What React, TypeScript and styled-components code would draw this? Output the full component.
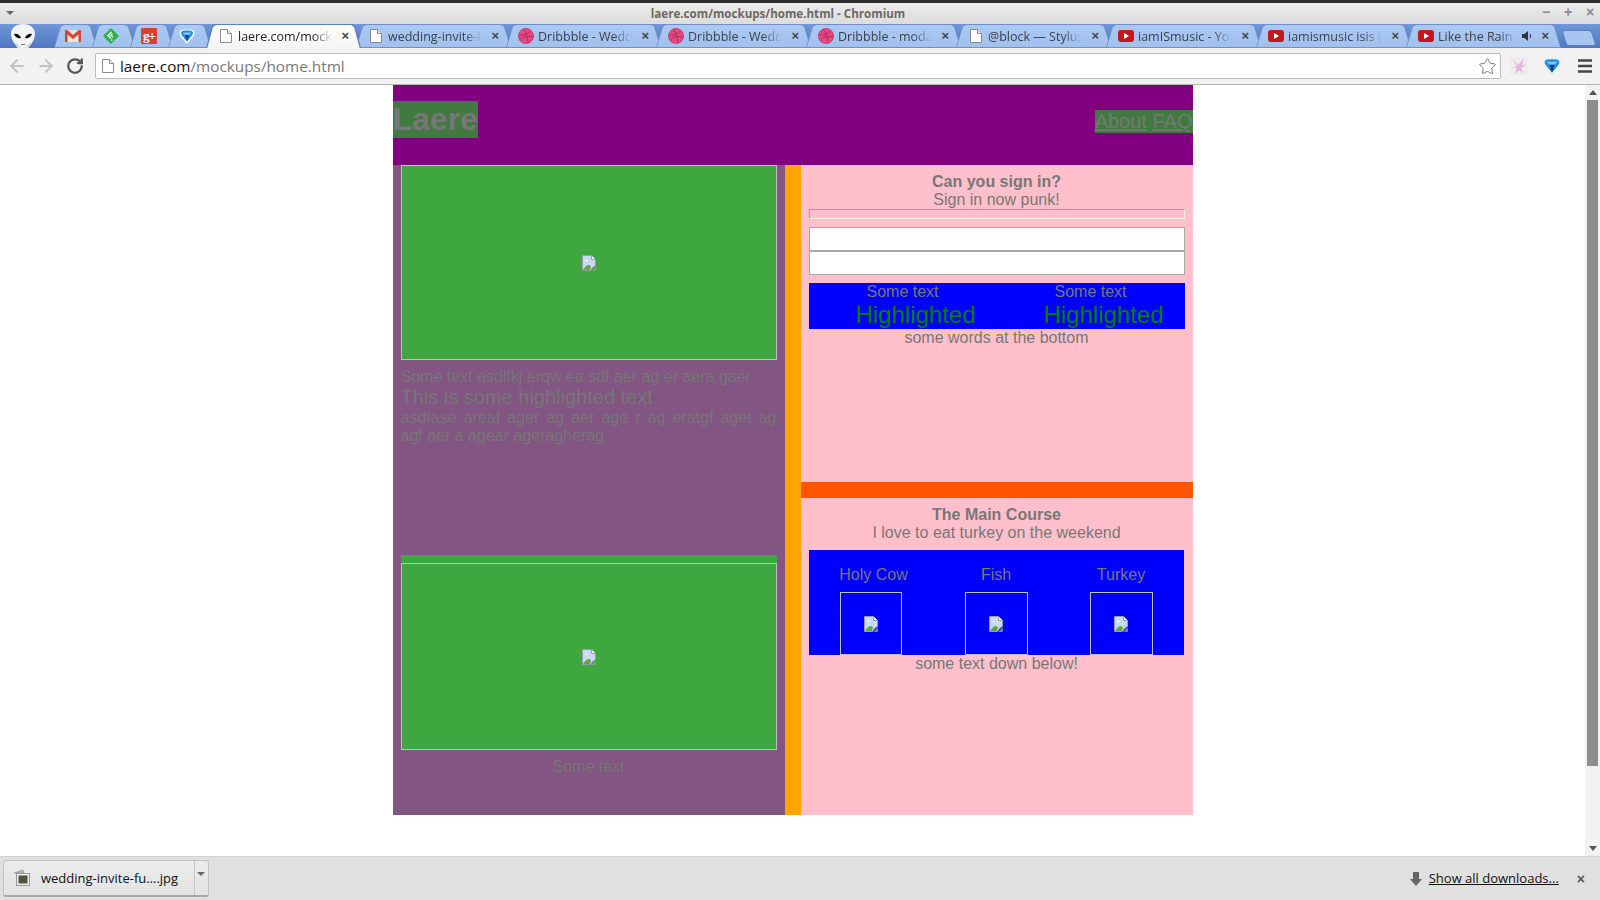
import React from "react";
import styled, { createGlobalStyle } from "styled-components";
import { ArrowLeft, ArrowRight, RotateCw, Star } from "lucide-react";

const GlobalStyle = createGlobalStyle`
  html, body {
    margin: 0;
    height: 100%;
    overflow: hidden;
    background: #fff;
  }
`;

const UI_FONT = `"Open Sans", "Noto Sans", "DejaVu Sans", sans-serif`;
const PAGE_FONT = `"Liberation Sans", Arial, sans-serif`;

const Window = styled.div`
  display: flex;
  flex-direction: column;
  width: 1600px;
  height: 900px;
  overflow: hidden;
`;

const TitleBar = styled.div`
  flex: 0 0 24px;
  box-sizing: border-box;
  position: relative;
  display: flex;
  align-items: center;
  justify-content: center;
  padding-right: 44px;
  border-top: 3px solid #2c2c2c;
  background: linear-gradient(#ececec, #dcdcdc);
  font: 700 11.6px ${UI_FONT};
  color: #6d6862;
`;

const MenuCaret = styled.span`
  position: absolute;
  left: 6px;
  top: 8px;
  border-left: 4px solid transparent;
  border-right: 4px solid transparent;
  border-top: 4px solid #666;
`;

const WindowControls = styled.div`
  position: absolute;
  right: 3px;
  top: 1px;
  display: flex;
  gap: 8px;
  color: #8a8a8a;
  font: 700 14px ${PAGE_FONT};
`;

const WindowControl = styled.span`
  width: 14px;
  text-align: center;
`;

const TabStrip = styled.div`
  flex: 0 0 24px;
  display: flex;
  align-items: stretch;
  padding-left: 8px;
  background: linear-gradient(#6f96d8, #4f78c4);
`;

const AvatarSlot = styled.div`
  flex: 0 0 46px;
  position: relative;
  z-index: 6;
`;

const AvatarImage = styled.svg`
  position: absolute;
  left: 3px;
  top: 0;
`;

const Tab = styled.div<{ $active?: boolean; $pinned?: boolean }>`
  position: relative;
  flex: 0 0 ${(p) => (p.$pinned ? "38px" : "150px")};
  display: flex;
  align-items: center;
  justify-content: ${(p) => (p.$pinned ? "center" : "flex-start")};
  padding-left: ${(p) => (p.$pinned ? "0" : "12px")};
  box-sizing: border-box;
  z-index: ${(p) => (p.$active ? 5 : 1)};
  font: 12.5px ${UI_FONT};
  color: ${(p) => (p.$active ? "#222" : "#3a3f48")};

  &::before,
  &::after {
    content: "";
    position: absolute;
    top: 0;
    bottom: 0;
    left: 0;
    right: -5px;
    z-index: -1;
    clip-path: polygon(0 100%, 6px 8%, 9px 0, calc(100% - 9px) 0, calc(100% - 6px) 8%, 100% 100%);
  }
  &::before {
    background: ${(p) => (p.$active ? "#5a7fbf" : "#6f8fc8")};
  }
  &::after {
    top: 1px;
    bottom: ${(p) => (p.$active ? "-1px" : "1px")};
    left: 1px;
    right: -4px;
    background: ${(p) =>
      p.$active ? "linear-gradient(#fff, #f3f3f3)" : "linear-gradient(#acc9f2, #a0c0ee)"};
  }
`;

const TabIconSlot = styled.span`
  flex: 0 0 16px;
  display: flex;
  align-items: center;
  justify-content: center;
`;

const TabTitle = styled.span<{ $narrow?: boolean }>`
  flex: 0 0 ${(p) => (p.$narrow ? "78px" : "94px")};
  margin-left: 4px;
  overflow: hidden;
  white-space: nowrap;
  -webkit-mask-image: linear-gradient(to right, #000 80%, transparent);
  mask-image: linear-gradient(to right, #000 80%, transparent);
`;

const TabClose = styled.span`
  position: absolute;
  right: 7px;
  top: 4px;
  font: 700 13px ${PAGE_FONT};
  color: #444;
`;

const Speaker = styled.svg`
  position: absolute;
  right: 23px;
  top: 7px;
`;

const GoogleMark = styled.span`
  width: 16px;
  height: 16px;
  display: block;
  background: #d8402f;
  border-radius: 1px;
  color: #fff;
  font: 700 13px/15px "Liberation Serif", serif;
  text-align: center;
  letter-spacing: -1px;
`;

const NewTab = styled.div`
  width: 28px;
  height: 14px;
  margin: 6px 0 0 8px;
  border: 1px solid #5d80bd;
  background: #a6c5ef;
  transform: skewX(18deg);
  border-radius: 3px;
`;

const Toolbar = styled.div`
  flex: 0 0 37px;
  box-sizing: border-box;
  display: flex;
  align-items: center;
  padding: 0 5px 0 7px;
  background: #f2f2f2;
  border-bottom: 1px solid #b4b4b4;
`;

const NavGroup = styled.div`
  display: flex;
  gap: 9px;
  margin-right: 10px;
`;

const NavSlot = styled.div<{ $dim?: boolean }>`
  width: 20px;
  height: 20px;
  display: flex;
  align-items: center;
  justify-content: center;
  color: ${(p) => (p.$dim ? "#c4c4c4" : "#555")};
`;

const AddressBar = styled.div`
  flex: 1;
  height: 26px;
  display: flex;
  align-items: center;
  box-sizing: border-box;
  padding: 0 3px 0 6px;
  margin-right: 8px;
  background: #fff;
  border: 1px solid #bcbcbc;
  border-radius: 2px;
  font: 15.3px ${UI_FONT};
`;

const UrlHost = styled.span`
  margin-left: 6px;
  color: #111;
`;

const UrlPath = styled.span`
  flex: 1;
  color: #777;
`;

const ToolIcons = styled.div`
  display: flex;
  align-items: center;
  gap: 13px;
`;

const ToolSlot = styled.div`
  width: 20px;
  height: 20px;
  display: flex;
  align-items: center;
  justify-content: center;
`;

const Viewport = styled.div`
  flex: 1;
  min-height: 0;
  display: flex;
`;

const PageArea = styled.div`
  flex: 1;
  display: flex;
  justify-content: center;
  background: #fff;
`;

const Scrollbar = styled.div`
  flex: 0 0 15px;
  display: flex;
  flex-direction: column;
  align-items: center;
  padding: 5px 0;
  box-sizing: border-box;
  background: #f2f2f2;
`;

const ScrollThumb = styled.div`
  width: 11px;
  height: 666px;
  margin: 5px 0 auto;
  background: #8d8d8d;
`;

const ScrollArrow = styled.span<{ $down?: boolean }>`
  border-left: 4px solid transparent;
  border-right: 4px solid transparent;
  ${(p) => (p.$down ? "border-top: 5px solid #555;" : "border-bottom: 5px solid #555;")}
`;

const Page = styled.div`
  width: 800px;
  height: 730px;
  display: flex;
  flex-direction: column;
  font: 16px/18px ${PAGE_FONT};
  color: #777;
`;

const Header = styled.header`
  flex: 0 0 80px;
  box-sizing: border-box;
  display: flex;
  justify-content: space-between;
  align-items: flex-start;
  padding-top: 16px;
  background: #800080;
`;

const Logo = styled.h1`
  margin: 0;
  font-size: 32px;
  line-height: 37px;
  font-weight: 700;
  background: #417a41;
`;

const Nav = styled.nav`
  margin-top: 9px;
  font-size: 20px;
  line-height: 23px;
  background: #417a41;
`;

const NavLink = styled.a`
  color: inherit;
  text-decoration: underline;
`;

const Columns = styled.div`
  flex: 1;
  display: flex;
`;

const LeftColumn = styled.section`
  flex: 0 0 392px;
  background: #825582;
`;

const Divider = styled.div`
  flex: 0 0 16px;
  background: #ffa500;
`;

const RightColumn = styled.section`
  flex: 1;
  display: flex;
  flex-direction: column;
  background: #ffc0cb;
  text-align: center;
`;

const Intro = styled.div`
  height: 390px;
  padding: 0 8px;
  box-sizing: border-box;
`;

const Photo = styled.div<{ $height: number }>`
  height: ${(p) => p.$height}px;
  box-sizing: border-box;
  display: flex;
  align-items: center;
  justify-content: center;
  border: 1px solid #c0c0c0;
  background: #3fa73f;
`;

const Copy = styled.div`
  margin-top: 8px;
`;

const Lead = styled.div`
  font-size: 20px;
  line-height: 23px;
`;

const Justified = styled.div`
  text-align: justify;
`;

const Feature = styled.div`
  padding: 0 8px;
`;

const FeatureBand = styled.div`
  padding-top: 8px;
  background: #3fa73f;
`;

const Caption = styled.div`
  margin-top: 8px;
  text-align: center;
`;

const Panel = styled.div`
  flex: 1;
  padding: 8px 8px 0;
`;

const PanelRule = styled.div`
  flex: 0 0 16px;
  background: #ff5500;
`;

const PanelTitle = styled.div`
  font-weight: 700;
`;

const EmptyField = styled.div`
  height: 10px;
  box-sizing: border-box;
  border: 1px solid;
  border-color: #a0a0a0 #eee #eee #a0a0a0;
`;

const Inputs = styled.div`
  margin: 8px 0;
  display: flex;
  flex-direction: column;
`;

const Field = styled.input`
  display: block;
  width: 100%;
  height: 24px;
  box-sizing: border-box;
  padding: 0;
  border: 1px solid #a9a9a9;
  background: #fff;
  outline: none;
`;

const PromoBar = styled.div`
  display: grid;
  grid-template-columns: 1fr 1fr;
  background: #00f;
`;

const PromoHighlight = styled.div`
  padding-left: 26px;
  font-size: 24px;
  line-height: 28px;
  color: #008000;
`;

const MenuBar = styled.div`
  width: 375px;
  height: 105px;
  padding-top: 16px;
  box-sizing: border-box;
  display: grid;
  grid-template-columns: repeat(3, 125px);
  margin-top: 8px;
  background: #00f;
`;

const MenuItem = styled.div`
  display: flex;
  flex-direction: column;
  align-items: center;
  gap: 8px;
`;

const MenuLabel = styled.span<{ $offset?: number }>`
  padding-left: ${(p) => p.$offset || 0}px;
`;

const Thumb = styled.div<{ $width: number }>`
  width: ${(p) => p.$width}px;
  height: 63px;
  box-sizing: border-box;
  display: flex;
  align-items: center;
  justify-content: center;
  border: 1px solid #c0c0c0;
`;

const Shelf = styled.footer`
  flex: 0 0 44px;
  box-sizing: border-box;
  display: flex;
  align-items: center;
  padding: 0 15px 0 3px;
  background: #e0e0e0;
  border-top: 1px solid #d2d2d2;
  font: 13px ${UI_FONT};
  color: #111;
`;

const DownloadItem = styled.div`
  width: 206px;
  height: 37px;
  box-sizing: border-box;
  display: flex;
  align-items: center;
  padding-left: 9px;
  background: linear-gradient(#ececec, #e3e3e3);
  border: 1px solid #c2c2c2;
  border-bottom: 2px solid #a8a8a8;
  border-radius: 3px;
`;

const DownloadName = styled.span`
  flex: 1;
  margin-left: 10px;
  white-space: nowrap;
`;

const DownloadMenu = styled.span`
  flex: 0 0 13px;
  height: 100%;
  position: relative;
  border-left: 1px solid #c6c6c6;

  &::after {
    content: "";
    position: absolute;
    left: 2px;
    top: 11px;
    border-left: 4px solid transparent;
    border-right: 4px solid transparent;
    border-top: 4px solid #666;
  }
`;

const ShowAll = styled.a`
  padding: 0 0 1px 7px;
  color: #111;
  text-decoration: underline;
  white-space: nowrap;
`;

const ShelfArrow = styled.svg`
  margin-left: auto;
`;

const ShelfClose = styled.span`
  margin-left: 18px;
  font: 700 14px ${PAGE_FONT};
  color: #555;
`;

const BrokenImage = () => (
  <svg width="14" height="16" viewBox="0 0 14 16">
    <path d="M.5.5h9l4 4v6l-3 2-2 3H.5z" fill="#c9d8f4" stroke="#9a9aa8" />
    <path d="M9.500.5v4h4" fill="#fff" stroke="#9a9aa8" />
    <path d="M3 6c0-1.200 2.500-1.500 3 0z" fill="#fff" />
    <path d="M1 15c1.500-3 4-5 6-5l2 1-1 4z" fill="#5fa83c" />
    <path d="M13.500 12v3.500H10z" fill="#5fa83c" stroke="#9a9aa8" strokeWidth=".6" />
  </svg>
);

const PageIcon = () => (
  <svg width="12" height="14" viewBox="0 0 12 14">
    <path d="M.5.5h7l4 4v9H.5z" fill="#fff" stroke="#8c8c8c" />
    <path d="M7.500.5v4h4" fill="#eee" stroke="#8c8c8c" />
  </svg>
);

const DribbbleIcon = () => (
  <svg width="16" height="16" viewBox="0 0 16 16" fill="none">
    <circle cx="8" cy="8" r="7.600" fill="#e6487f" stroke="#c93469" strokeWidth=".8" />
    <path
      d="M5 1.200c2.500 3 4.500 8 5.200 13.500M1 7c4 .5 8-.5 11.500-4M2.200 12.500C4.500 9 8.500 7.800 15 9"
      stroke="#a92a5a"
      strokeWidth=".9"
    />
  </svg>
);

const YoutubeIcon = () => (
  <svg width="16" height="12" viewBox="0 0 16 12">
    <rect width="16" height="12" rx="3" fill="#c4161c" />
    <path d="M6 3l5 3-5 3z" fill="#fff" />
  </svg>
);

const GmailIcon = () => (
  <svg width="16" height="12" viewBox="0 0 16 12">
    <rect width="16" height="12" fill="#e8e4dc" />
    <path d="M0 12V0h2.200L8 5l5.800-5H16v12h-2.500V4.500L8 9 2.500 4.500V12z" fill="#d4453a" />
  </svg>
);

const FeedlyIcon = () => (
  <svg width="16" height="16" viewBox="0 0 16 16">
    <path d="M8 1l7 7-7 7-7-7z" fill="#2bb24c" stroke="#2bb24c" strokeWidth="1.500" strokeLinejoin="round" />
    <path d="M8.500 4L5 7.500 8 10.500M9.500 6L7.300 8M8 12.200h1.500M10 8.200l-1.200 1.200" stroke="#fff" strokeWidth="1.300" fill="none" />
  </svg>
);

const DiamondIcon = ({ size = 16 }: { size?: number }) => (
  <svg width={size} height={size} viewBox="0 0 16 16">
    <path d="M.5 5C.5 2.500 3 1 5 1.500h6C13 1 15.500 2.500 15.500 5c0 3-5 8-7.500 10.500C5.500 13 .5 8 .5 5z" fill="#fff" stroke="#cfd8e6" strokeWidth=".5" />
    <path d="M2 5c0-1.500 1.500-2.500 3-2.500h6c1.500 0 3 1 3 2.500 0 2-4 6-6 8.500C6 11 2 7 2 5z" fill="#1f8fe0" />
    <path d="M3.500 4.500h9L10 7H6z" fill="#7cc4f5" />
    <path d="M6 7h4l-2 6.500z" fill="#0b3f8a" />
  </svg>
);

const AlienIcon = () => (
  <AvatarImage width="24" height="27" viewBox="0 0 24 27">
    <path d="M12 0c7 0 12 4 12 10 0 6-5 12-8 15-2 2-6 2-8 0C5 22 0 16 0 10 0 4 5 0 12 0z" fill="#f4f4f4" />
    <path d="M4 18c3 3 5 6 8 6s5-3 8-6c-2 8-14 8-16 0z" fill="#c9c9c9" />
    <path d="M3 10c3-1 6 1 7 4-3 1-6-1-7-4zM21 10c-3-1-6 1-7 4 3 1 6-1 7-4z" fill="#111" />
    <path d="M10 20.500h4" stroke="#777" />
  </AvatarImage>
);

const BunnyIcon = () => (
  <svg width="20" height="20" viewBox="0 0 20 20">
    <rect x="1" y="1" width="18" height="18" fill="#eeeaee" />
    <path d="M3 3l6 6 1-1 5-6-2 7 4 0-5 3 3 6-5-4-4 4 2-6-4 0 4-2z" fill="#dcb8d8" />
  </svg>
);

const MenuIcon = () => (
  <svg width="14" height="14" viewBox="0 0 14 14">
    <path d="M0 1.500h14M0 7h14M0 12.500h14" stroke="#444" strokeWidth="2.500" />
  </svg>
);

const SpeakerIcon = () => (
  <Speaker width="11" height="10" viewBox="0 0 11 10">
    <path d="M0 3h2.500L6 0v10L2.500 7H0z" fill="#333" />
    <path d="M8 3c.8 1.200.8 2.800 0 4" stroke="#333" fill="none" />
  </Speaker>
);

const PhotoIcon = () => (
  <svg width="18" height="18" viewBox="0 0 18 18">
    <path d="M1 4l9-3 1 3z" fill="#bbb" stroke="#888" strokeWidth=".6" />
    <rect x="3.500" y="4.500" width="13" height="12" fill="#eee" stroke="#999" />
    <rect x="5.500" y="6.500" width="9" height="8" fill="#4f5342" />
  </svg>
);

type TabInfo = { title: string; icon: React.ReactNode; sound?: boolean };

const tabs: TabInfo[] = [
  { title: "laere.com/mockups/home.html", icon: <PageIcon /> },
  { title: "wedding-invite-full", icon: <PageIcon /> },
  { title: "Dribbble - Wedding", icon: <DribbbleIcon /> },
  { title: "Dribbble - Wedding", icon: <DribbbleIcon /> },
  { title: "Dribbble - modal", icon: <DribbbleIcon /> },
  { title: "@block — Stylus docs", icon: <PageIcon /> },
  { title: "iamISmusic - YouTube", icon: <YoutubeIcon /> },
  { title: "iamismusic isis (iam", icon: <YoutubeIcon /> },
  { title: "Like the Rain - Clint", icon: <YoutubeIcon />, sound: true },
];

const menuItems = [
  { label: "Holy Cow", offset: 5, width: 62 },
  { label: "Fish", width: 63 },
  { label: "Turkey", width: 63 },
];

export default function App() {
  return (
    <Window>
      <GlobalStyle />
      <TitleBar>
        <MenuCaret />
        laere.com/mockups/home.html - Chromium
        <WindowControls>
          <WindowControl>−</WindowControl>
          <WindowControl>+</WindowControl>
          <WindowControl>×</WindowControl>
        </WindowControls>
      </TitleBar>

      <TabStrip>
        <AvatarSlot>
          <AlienIcon />
        </AvatarSlot>
        <Tab $pinned>
          <GmailIcon />
        </Tab>
        <Tab $pinned>
          <FeedlyIcon />
        </Tab>
        <Tab $pinned>
          <GoogleMark>g+</GoogleMark>
        </Tab>
        <Tab $pinned>
          <DiamondIcon />
        </Tab>
        {tabs.map((tab, i) => (
          <Tab key={i} $active={i === 0}>
            <TabIconSlot>{tab.icon}</TabIconSlot>
            <TabTitle $narrow={tab.sound}>{tab.title}</TabTitle>
            {tab.sound && <SpeakerIcon />}
            <TabClose>×</TabClose>
          </Tab>
        ))}
        <NewTab />
      </TabStrip>

      <Toolbar>
        <NavGroup>
          <NavSlot $dim>
            <ArrowLeft size={20} strokeWidth={2.5} />
          </NavSlot>
          <NavSlot $dim>
            <ArrowRight size={20} strokeWidth={2.5} />
          </NavSlot>
          <NavSlot>
            <RotateCw size={18} strokeWidth={3} />
          </NavSlot>
        </NavGroup>
        <AddressBar>
          <PageIcon />
          <UrlHost>laere.com</UrlHost>
          <UrlPath>/mockups/home.html</UrlPath>
          <Star size={19} color="#777" strokeWidth={1.2} />
        </AddressBar>
        <ToolIcons>
          <ToolSlot>
            <BunnyIcon />
          </ToolSlot>
          <ToolSlot>
            <DiamondIcon size={20} />
          </ToolSlot>
          <ToolSlot>
            <MenuIcon />
          </ToolSlot>
        </ToolIcons>
      </Toolbar>

      <Viewport>
        <PageArea>
          <Page>
            <Header>
              <Logo>Laere</Logo>
              <Nav>
                <NavLink>About</NavLink> <NavLink>FAQ</NavLink>
              </Nav>
            </Header>
            <Columns>
              <LeftColumn>
                <Intro>
                  <Photo $height={195}>
                    <BrokenImage />
                  </Photo>
                  <Copy>
                    Some text asdlfkj erqw ea sdf aer ag er aera gaer
                    <Lead>This is some highlighted text</Lead>
                    <Justified>
                      asdfase areaf ager ag aer age r ag eratgf aget ag agf aer a agear ageragherag
                    </Justified>
                  </Copy>
                </Intro>
                <Feature>
                  <FeatureBand>
                    <Photo $height={187}>
                      <BrokenImage />
                    </Photo>
                  </FeatureBand>
                  <Caption>Some text</Caption>
                </Feature>
              </LeftColumn>
              <Divider />
              <RightColumn>
                <Panel>
                  <PanelTitle>Can you sign in?</PanelTitle>
                  Sign in now punk!
                  <EmptyField />
                  <Inputs>
                    <Field />
                    <Field />
                  </Inputs>
                  <PromoBar>
                    <div>
                      Some text
                      <PromoHighlight>Highlighted</PromoHighlight>
                    </div>
                    <div>
                      Some text
                      <PromoHighlight>Highlighted</PromoHighlight>
                    </div>
                  </PromoBar>
                  some words at the bottom
                </Panel>
                <PanelRule />
                <Panel>
                  <PanelTitle>The Main Course</PanelTitle>
                  I love to eat turkey on the weekend
                  <MenuBar>
                    {menuItems.map((item) => (
                      <MenuItem key={item.label}>
                        <MenuLabel $offset={item.offset}>{item.label}</MenuLabel>
                        <Thumb $width={item.width}>
                          <BrokenImage />
                        </Thumb>
                      </MenuItem>
                    ))}
                  </MenuBar>
                  some text down below!
                </Panel>
              </RightColumn>
            </Columns>
          </Page>
        </PageArea>
        <Scrollbar>
          <ScrollArrow />
          <ScrollThumb />
          <ScrollArrow $down />
        </Scrollbar>
      </Viewport>

      <Shelf>
        <DownloadItem>
          <PhotoIcon />
          <DownloadName>wedding-invite-fu….jpg</DownloadName>
          <DownloadMenu />
        </DownloadItem>
        <ShelfArrow width="12" height="14" viewBox="0 0 12 14">
          <path d="M3 0h6v7h3l-6 7-6-7h3z" fill="#666" />
        </ShelfArrow>
        <ShowAll>Show all downloads...</ShowAll>
        <ShelfClose>×</ShelfClose>
      </Shelf>
    </Window>
  );
}
